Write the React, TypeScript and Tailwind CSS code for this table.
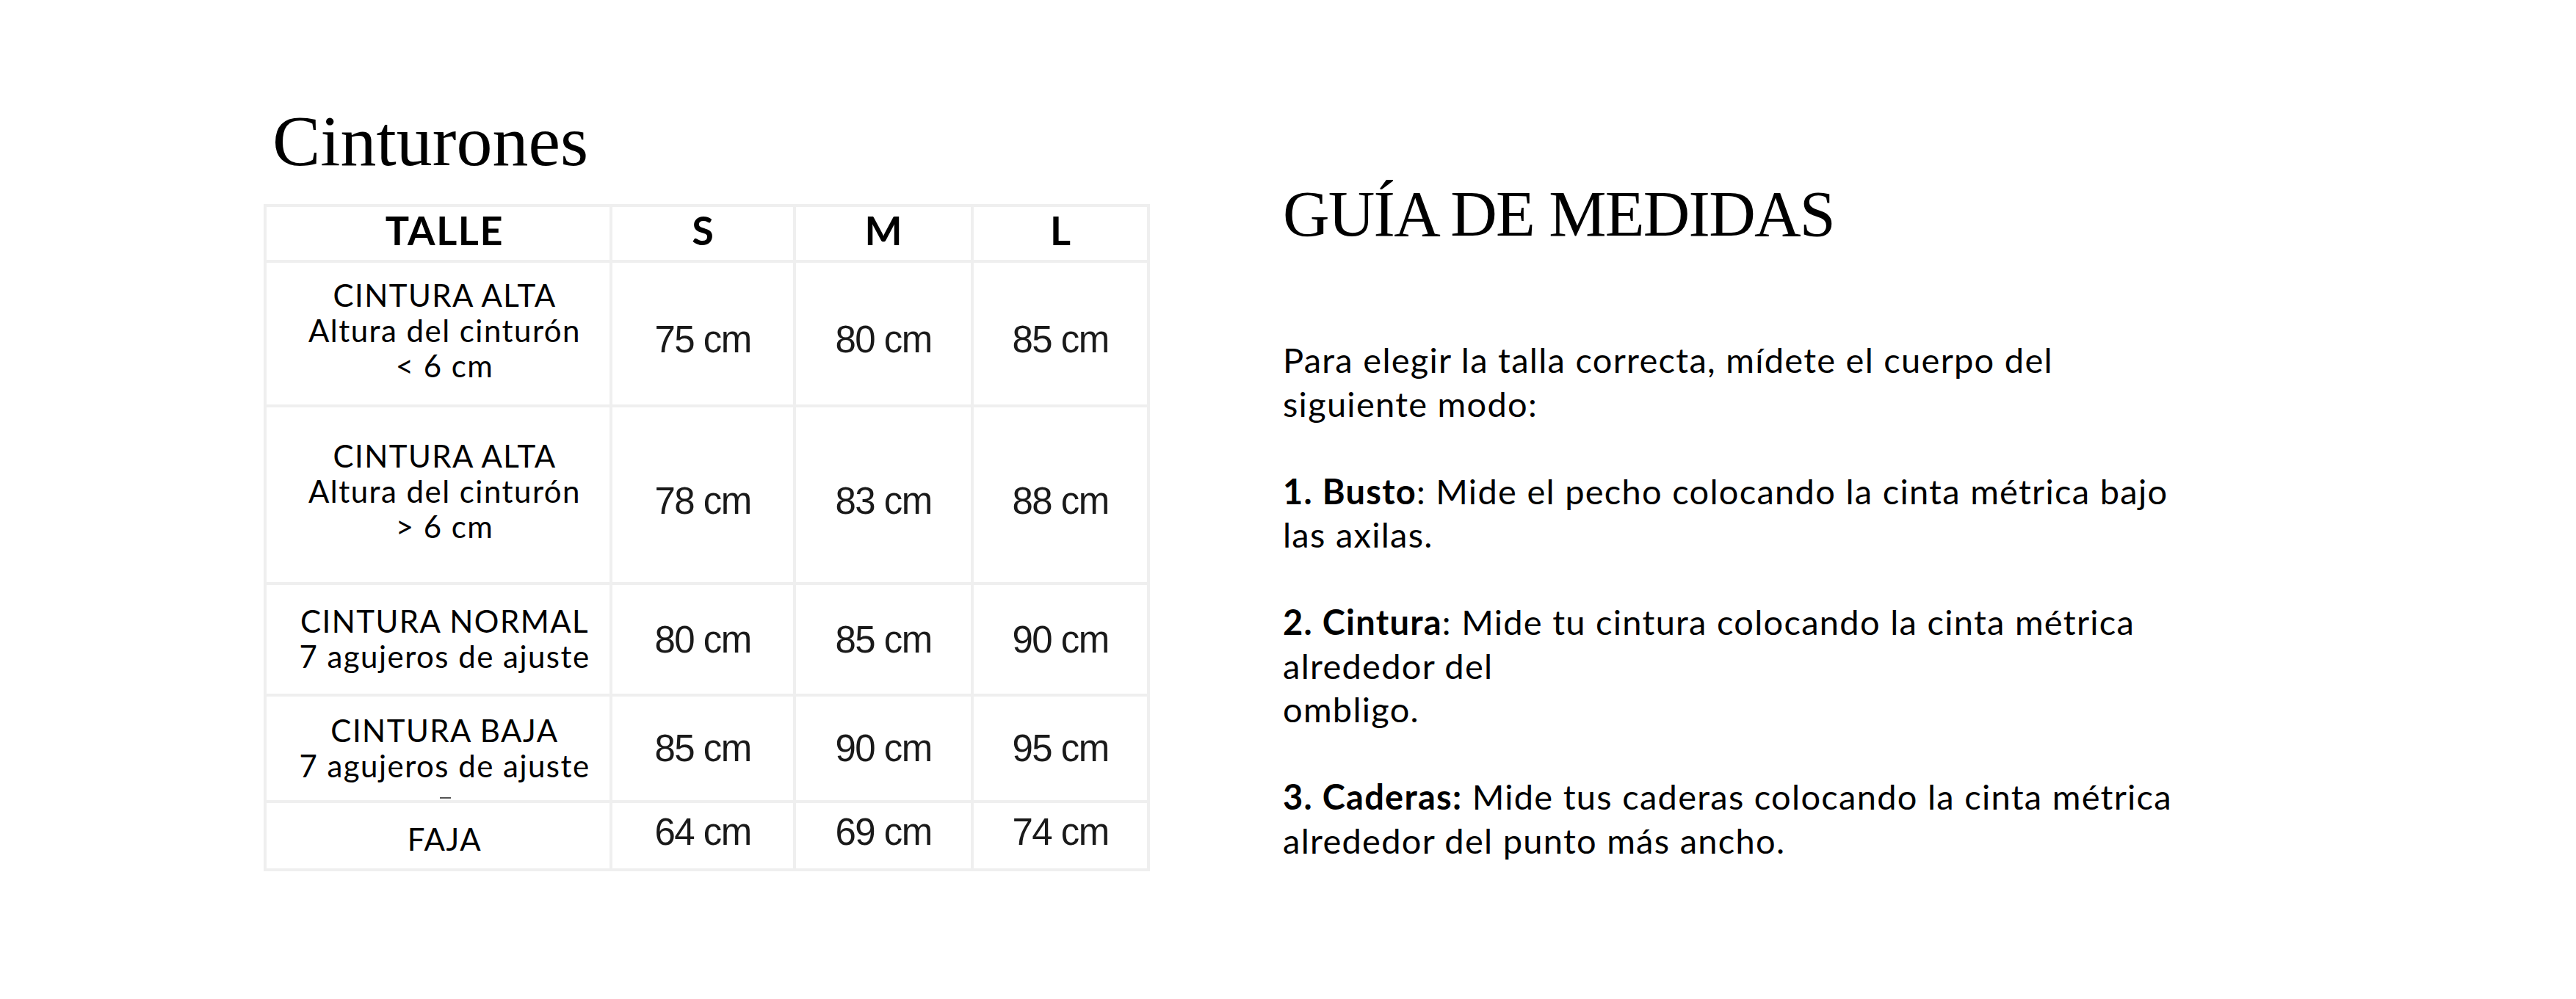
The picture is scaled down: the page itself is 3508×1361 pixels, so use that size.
import React from "react";

const rows = [
  { label: ["CINTURA ALTA", "Altura del cinturón", "< 6 cm"], vals: ["75 cm", "80 cm", "85 cm"], h: "h-[197px]", lab: "mb-[10px]", val: "mt-[16px]" },
  { label: ["CINTURA ALTA", "Altura del cinturón", "> 6 cm"], vals: ["78 cm", "83 cm", "88 cm"], h: "h-[242px]", lab: "mb-[10px]", val: "mt-[16px]" },
  { label: ["CINTURA NORMAL", "7 agujeros de ajuste"], vals: ["80 cm", "85 cm", "90 cm"], h: "h-[152px]", lab: "mb-[3px]", val: "" },
  { label: ["CINTURA BAJA", "7 agujeros de ajuste"], vals: ["85 cm", "90 cm", "95 cm"], h: "h-[145px]", lab: "mb-[2px]", val: "", mark: true },
  { label: ["FAJA"], vals: ["64 cm", "69 cm", "74 cm"], h: "h-[93px]", lab: "mt-[8px]", val: "mb-[10px]" },
];

const lato = { fontFamily: "Lato, 'Open Sans', sans-serif" };
const serif = { fontFamily: "'Liberation Serif', 'Times New Roman', serif" };
const arial = { fontFamily: "'Liberation Sans', Arial, sans-serif" };

function Cell({ children, className = "" }: { children?: React.ReactNode; className?: string }) {
  return (
    <div className={`relative flex flex-col items-center justify-center border-r-4 border-b-4 border-[#efefef] ${className}`}>
      {children}
    </div>
  );
}

export default function App() {
  return (
    <div className="w-[3508px] h-[1361px] bg-white text-black overflow-hidden">
      <div className="flex pt-[143px] pl-[359px]">
        {/* Left column */}
        <div className="w-[1207px] flex flex-col">
          <h2 className="pl-[12px] text-[98px] leading-none font-normal" style={serif}>
            Cinturones
          </h2>
          <div className="mt-[37px] border-l-4 border-t-4 border-[#efefef] grid grid-cols-[471px_250px_242px_240px]">
            {/* header */}
            <Cell className="h-[76px] pl-[18px]">
              <span className="mb-[8px] text-[54px] leading-none font-bold tracking-[0.03em]" style={lato}>TALLE</span>
            </Cell>
            {["S", "M", "L"].map((s) => (
              <Cell key={s} className="h-[76px]">
                <span className="mb-[8px] text-[54px] leading-none font-bold" style={lato}>{s}</span>
              </Cell>
            ))}
            {rows.map((r, i) => (
              <React.Fragment key={i}>
                <Cell className={`${r.h} pl-[18px]`}>
                  <div className={`${r.lab} text-center text-[42px] leading-[48px] tracking-[0.035em]`} style={lato}>
                    {r.label.map((l, j) => (
                      <div key={j} className="whitespace-nowrap">{l}</div>
                    ))}
                  </div>
                  {r.mark && (
                    <span className="absolute left-[236px] bottom-[2px] w-[15px] h-[2px] bg-[#555]" />
                  )}
                </Cell>
                {r.vals.map((v, j) => (
                  <Cell key={j} className={r.h}>
                    <span className={`${r.val} text-[51px] leading-none tracking-[-0.03em] text-[#1a1a1a]`} style={arial}>{v}</span>
                  </Cell>
                ))}
              </React.Fragment>
            ))}
          </div>
        </div>

        {/* Right column */}
        <div className="ml-[181px] pt-[105px] flex flex-col">
          <h1 className="text-[88px] leading-none font-normal tracking-[-0.02em] whitespace-nowrap" style={serif}>
            GUÍA DE MEDIDAS
          </h1>
          <div className="mt-[125px] text-[47px] leading-[59.5px] tracking-[0.027em] whitespace-nowrap" style={lato}>
            <div>Para elegir la talla correcta, mídete el cuerpo del</div>
            <div>siguiente modo:</div>
            <div>&nbsp;</div>
            <div>
              <b className="font-bold">1. Busto</b>: Mide el pecho colocando la cinta métrica bajo
            </div>
            <div>las axilas.</div>
            <div>&nbsp;</div>
            <div>
              <b className="font-bold">2. Cintura</b>: Mide tu cintura colocando la cinta métrica
            </div>
            <div>alrededor del</div>
            <div>ombligo.</div>
            <div>&nbsp;</div>
            <div>
              <b className="font-bold">3. Caderas:</b> Mide tus caderas colocando la cinta métrica
            </div>
            <div>alrededor del punto más ancho.</div>
          </div>
        </div>
      </div>
    </div>
  );
}
